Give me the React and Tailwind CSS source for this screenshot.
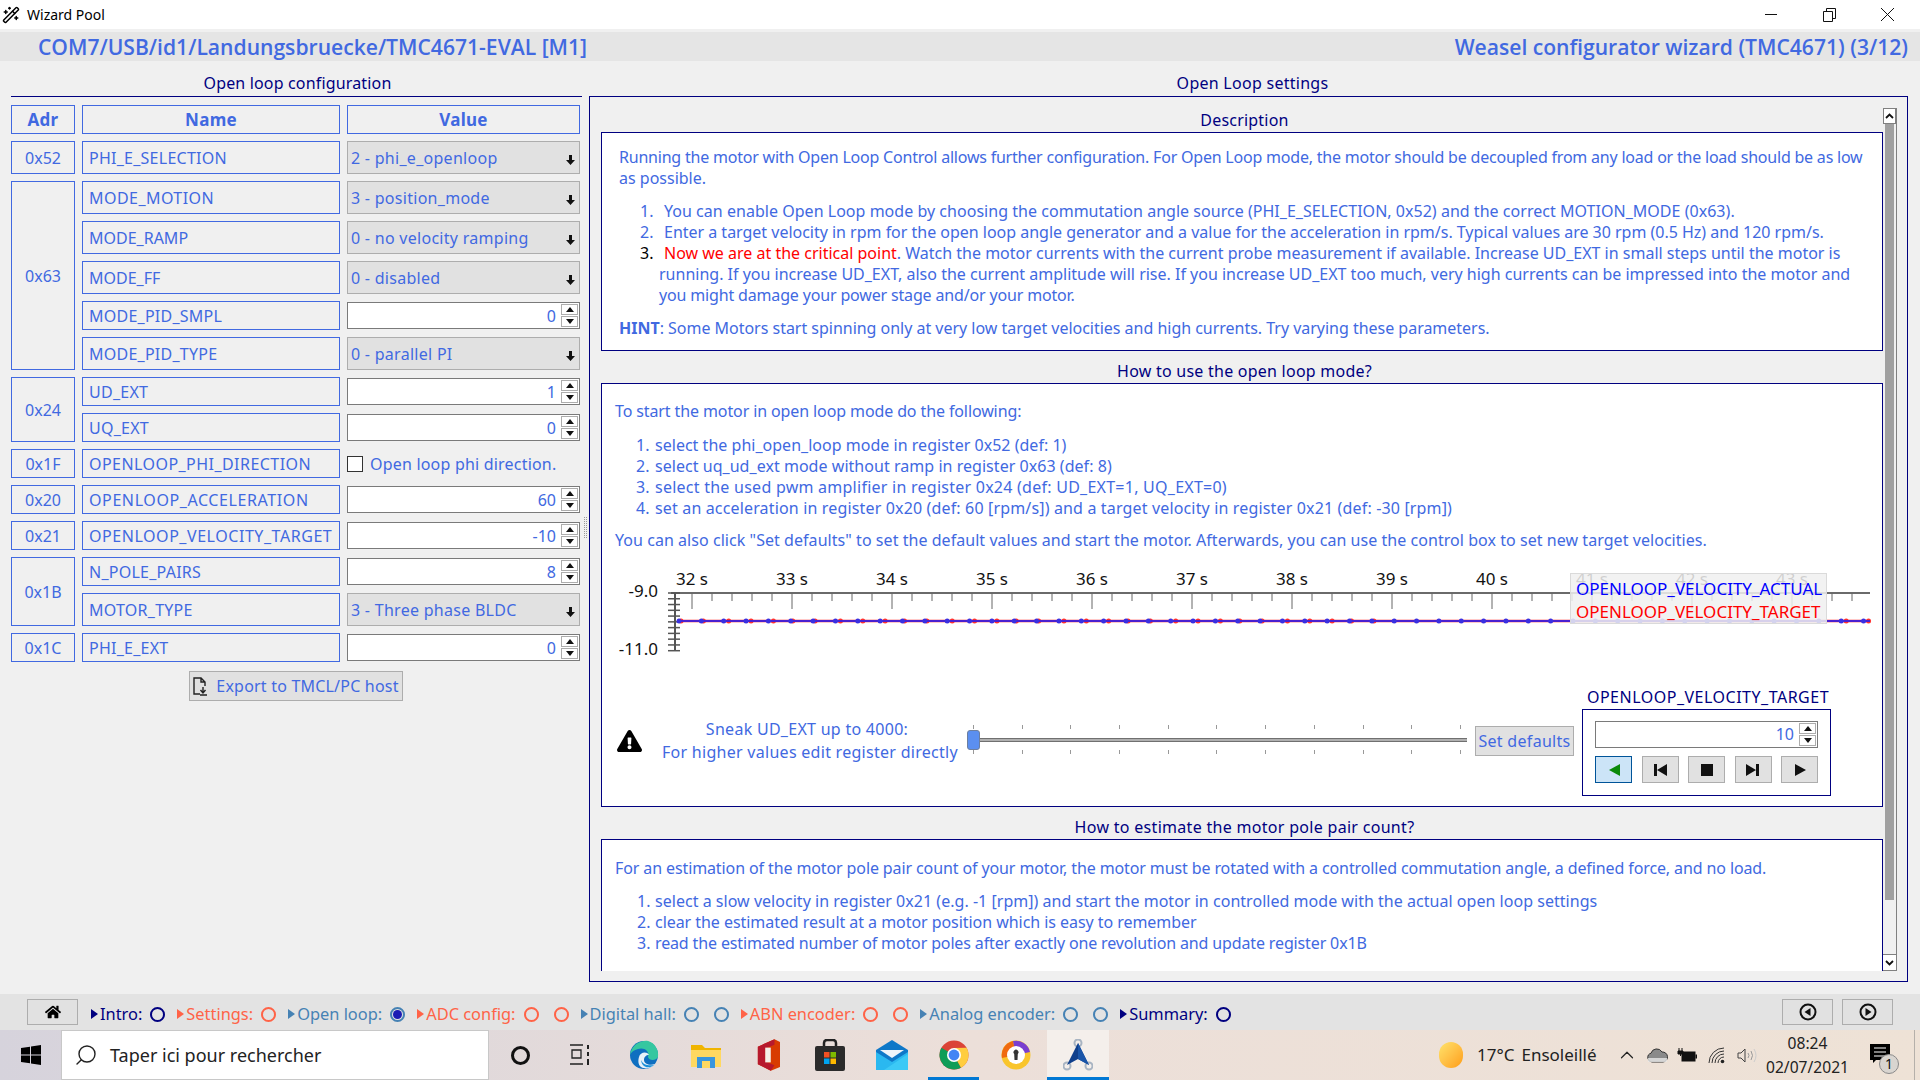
import React from "react";
import { Search, ChevronUp, WandSparkles } from "lucide-react";
import { FaHome, FaExclamationTriangle } from "react-icons/fa";

const regRows = [
  { adr: "0x52", span: "row-span-1", name: "PHI_E_SELECTION", combo: "2 - phi_e_openloop" },
  { adr: "0x63", span: "row-span-5", name: "MODE_MOTION", combo: "3 - position_mode", track: "tracking-[0.45px]" },
  { name: "MODE_RAMP", combo: "0 - no velocity ramping", track: "tracking-[0px]" },
  { name: "MODE_FF", combo: "0 - disabled", track: "tracking-[0px]" },
  { name: "MODE_PID_SMPL", spin: "0" },
  { name: "MODE_PID_TYPE", combo: "0 - parallel PI" },
  { adr: "0x24", span: "row-span-2", name: "UD_EXT", spin: "1" },
  { name: "UQ_EXT", spin: "0" },
  { adr: "0x1F", span: "row-span-1", name: "OPENLOOP_PHI_DIRECTION", check: "Open loop phi direction.", track: "tracking-[0.45px]" },
  { adr: "0x20", span: "row-span-1", name: "OPENLOOP_ACCELERATION", spin: "60", track: "tracking-[0.6px]" },
  { adr: "0x21", span: "row-span-1", name: "OPENLOOP_VELOCITY_TARGET", spin: "-10", track: "tracking-[0.55px]" },
  { adr: "0x1B", span: "row-span-2", name: "N_POLE_PAIRS", spin: "8" },
  { name: "MOTOR_TYPE", combo: "3 - Three phase BLDC" },
  { adr: "0x1C", span: "row-span-1", name: "PHI_E_EXT", spin: "0" },
];

const steps = [
  { label: "Intro:", color: "text-[#000080]", circles: 1 },
  { label: "Settings:", color: "text-[#ff6347]", circles: 1 },
  { label: "Open loop:", color: "text-[#4682b4]", circles: 1, active: true },
  { label: "ADC config:", color: "text-[#ff6347]", circles: 2 },
  { label: "Digital hall:", color: "text-[#4682b4]", circles: 2 },
  { label: "ABN encoder:", color: "text-[#ff6347]", circles: 2 },
  { label: "Analog encoder:", color: "text-[#4682b4]", circles: 2 },
  { label: "Summary:", color: "text-[#000080]", circles: 1 },
];

function SpinButtons() {
  return (
    <div className="flex flex-col gap-px w-[17px] shrink-0">
      <div className="h-[11px] border border-[#adadad] flex items-center justify-center">
        <svg width="8" height="5"><path d="M4 0 L8 5 L0 5 Z" fill="#111" /></svg>
      </div>
      <div className="h-[11px] border border-[#adadad] flex items-center justify-center">
        <svg width="8" height="5"><path d="M0 0 L8 0 L4 5 Z" fill="#111" /></svg>
      </div>
    </div>
  );
}

function SpinBox({ value }) {
  return (
    <div className="my-px h-[27px] bg-white border border-[#7a7a7a] flex items-center justify-end pr-[1px]">
      <span className="pr-[5px] text-[#4169e1]">{value}</span>
      <SpinButtons />
    </div>
  );
}

function Combo({ value }) {
  return (
    <div className="relative bg-[#e1e1e1] border border-[#adadad] flex items-center pl-[3px] text-[#4169e1] tracking-[0.28px]">
      {value}
      <svg className="absolute right-[4px] top-[13px]" width="9" height="10">
        <path d="M3 0 H6 V5 H9 L4.5 10 L0 5 H3 Z" fill="#111" />
      </svg>
    </div>
  );
}

function RegisterTable() {
  const cell = "border border-[#4169e1] text-[#4169e1] flex items-center";
  return (
    <div className="grid grid-cols-[64px_258px_233px] grid-rows-[29px_33px_33px_33px_33px_29px_33px_29px_29px_29px_29px_29px_29px_33px_29px] gap-x-[7px] gap-y-[7px]">
      {["Adr", "Name", "Value"].map((h) => (
        <div key={h} className={`${cell} justify-center font-bold text-[17px] tracking-[0.3px]`}>{h}</div>
      ))}
      {regRows.map((r) => (
        <React.Fragment key={r.name}>
          {r.adr && <div className={`${cell} ${r.span} col-start-1 justify-center`}>{r.adr}</div>}
          <div className={`${cell} col-start-2 pl-[6px] whitespace-nowrap ${r.track || "tracking-[0.25px]"}`}>{r.name}</div>
          <div className="col-start-3">
            {r.combo && <div className="h-full grid"><Combo value={r.combo} /></div>}
            {r.spin && <SpinBox value={r.spin} />}
            {r.check && (
              <div className="h-full flex items-center gap-[7px] text-[#4169e1] whitespace-nowrap tracking-[0.2px]">
                <span className="w-[16px] h-[16px] bg-white border border-[#333]" />
                {r.check}
              </div>
            )}
          </div>
        </React.Fragment>
      ))}
    </div>
  );
}

function ListItem({ n, numW = "w-[24px]", children, numClass = "", track = "" }) {
  return (
    <div className="flex whitespace-nowrap">
      <span className={`${numW} shrink-0 ${numClass}`}>{n}</span>
      <div className={track}>{children}</div>
    </div>
  );
}

function Description() {
  return (
    <div className="h-[219px] bg-white border border-[#000080] pt-[14px] pl-[17px] text-[#4169e1] leading-[21px] overflow-hidden">
      <p className="whitespace-nowrap">
        <span className="tracking-[-0.21px]">Running the motor with Open Loop Control allows further configuration. For Open Loop mode, the motor should be decoupled from any load or the load should be as low</span>
        <br />
        as possible.
      </p>
      <div className="mt-[12px] ml-[21px]">
        <ListItem n="1." track="tracking-[0.03px]">You can enable Open Loop mode by choosing the commutation angle source (PHI_E_SELECTION, 0x52) and the correct MOTION_MODE (0x63).</ListItem>
        <ListItem n="2." track="tracking-[-0.015px]">Enter a target velocity in rpm for the open loop angle generator and a value for the acceleration in rpm/s. Typical values are 30 rpm (0.5 Hz) and 120 rpm/s.</ListItem>
        <ListItem n="3." numClass="text-black">
          <span className="text-[#ff0000]">Now we are at the critical point</span>. Watch the motor currents with the current probe measurement if available. Increase UD_EXT in small steps until the motor is
          <div className="-ml-[5px]">running. If you increase UD_EXT, also the current amplitude will rise. If you increase UD_EXT too much, very high currents can be impressed into the motor and</div>
          <div className="-ml-[5px] tracking-[-0.16px]">you might damage your power stage and/or your motor.</div>
        </ListItem>
      </div>
      <p className="mt-[12px] whitespace-nowrap tracking-[-0.02px]">
        <b>HINT</b>: Some Motors start spinning only at very low target velocities and high currents. Try varying these parameters.
      </p>
    </div>
  );
}

function Chart() {
  const minor = [];
  for (let x = 90; x <= 1258; x += 20) minor.push(x);
  const yTicks = [];
  for (let i = 0; i <= 10; i++) yTicks.push(32 + i * 5.77);
  const blue = [];
  for (let x = 77; x <= 1264; x += 22.35) blue.push(x);
  const labels = [32, 33, 34, 35, 36, 37, 38, 39, 40, 41, 42, 43];
  return (
    <div className="relative h-[120px] mt-[10px]">
      <svg width="1280" height="120" className="block">
        <line x1="69" y1="32" x2="1268" y2="32" stroke="#6a6a6a" strokeWidth="2" />
        {minor.map((x, i) => (
          <line key={x} x1={x} y1="32" x2={x} y2={i % 5 === 0 ? 48 : 40} stroke="#666" strokeWidth="1" />
        ))}
        <line x1="73" y1="32" x2="73" y2="89" stroke="#555" strokeWidth="2" />
        {yTicks.map((y) => (
          <line key={y} x1="66" y1={y} x2="78" y2={y} stroke="#555" strokeWidth="1.5" />
        ))}
        {labels.map((s, i) => (
          <text key={s} x={90 + i * 100} y="24" textAnchor="middle" fontSize="17" fill="#111" fontFamily="Noto Sans">{s} s</text>
        ))}
        <text x="56" y="36" textAnchor="end" fontSize="17" fill="#111" fontFamily="Noto Sans">-9.0</text>
        <text x="56" y="94" textAnchor="end" fontSize="17" fill="#111" fontFamily="Noto Sans">-11.0</text>
        <line x1="77" y1="60" x2="1268" y2="60" stroke="#ff2020" strokeWidth="2.5" />
        {blue.map((x, i) =>
          x < 780 || x > 1235 ? <circle key={x} cx={x + (i % 5 > 1 ? 5 : 2)} cy="60" r="2.5" fill="#ff3030" /> : null
        )}
        <line x1="77" y1="60" x2="1268" y2="60" stroke="#4a20d0" strokeWidth="2" />
        {blue.map((x) => (
          <circle key={x} cx={x} cy="60" r="2.5" fill="#3a30e0" />
        ))}
      </svg>
      <div className="absolute left-[968px] top-[12px] w-[257px] h-[51px] bg-[#f0f0f0]/85 border border-[#dadada] pl-[5px] text-[17px] leading-[23px] pt-[3px] whitespace-nowrap">
        <div className="text-[#0000ff]">OPENLOOP_VELOCITY_ACTUAL</div>
        <div className="text-[#ff0000]">OPENLOOP_VELOCITY_TARGET</div>
      </div>
    </div>
  );
}

function MediaButton({ active, children }) {
  return (
    <div className={`w-[37px] h-[27px] border flex items-center justify-center ${active ? "bg-[#cce4f7] border-[#005499]" : "bg-[#e1e1e1] border-[#adadad]"}`}>
      {children}
    </div>
  );
}

function SliderRow() {
  const ticks = [0, 1, 2, 3, 4, 5, 6, 7, 8, 9, 10];
  return (
    <div className="flex mt-[6px] pl-[15px]">
      <div className="flex items-center h-[108px]">
        <FaExclamationTriangle className="w-[25px] h-[24px] text-black mr-[20px]" />
        <div className="w-[290px] text-center text-[#4169e1] leading-[23px] whitespace-nowrap tracking-[0.28px]">
          Sneak UD_EXT up to 4000:
          <br />
          For higher values edit register directly
        </div>
        <div className="relative w-[500px] h-[30px] ml-[15px] -mt-[3px]">
          <div className="absolute left-0 right-0 top-[13px] h-[4px] bg-[#b0b0b0] border-y border-[#707070]" />
          <div className="absolute left-0 top-[5px] w-[13px] h-[20px] rounded-[3px] bg-[#5b8ff0] border border-[#6d7f9f]" />
          <div className="absolute left-[6px] right-[6px] top-0 flex justify-between">
            {ticks.map((t) => <span key={t} className="w-px h-[4px] bg-[#999]" />)}
          </div>
          <div className="absolute left-[6px] right-[6px] top-[25px] flex justify-between">
            {ticks.map((t) => <span key={t} className="w-px h-[4px] bg-[#999]" />)}
          </div>
        </div>
        <div className="ml-[8px] w-[99px] h-[30px] bg-[#e1e1e1] border border-[#adadad] text-[#4169e1] flex items-center justify-center whitespace-nowrap tracking-[0.3px]">Set defaults</div>
      </div>
      <div className="ml-[8px] w-[249px]">
        <div className="h-[22px] pl-[3px] text-center text-[#000080] leading-[21px] whitespace-nowrap tracking-[0.5px]">OPENLOOP_VELOCITY_TARGET</div>
        <div className="h-[87px] border border-[#000080] pt-[11px] px-[12px]">
          <div className="h-[27px] bg-white border border-[#7a7a7a] flex items-center justify-end pr-[1px]">
            <span className="pr-[5px] text-[#4169e1]">10</span>
            <SpinButtons />
          </div>
          <div className="mt-[8px] flex justify-between">
            <MediaButton active><svg width="14" height="14"><path d="M13 1 V13 L2 7 Z" fill="#0a8a0a" /></svg></MediaButton>
            <MediaButton><svg width="14" height="14"><path d="M1 1 H4 V13 H1 Z M14 1 V13 L4 7 Z" fill="#111" /></svg></MediaButton>
            <MediaButton><svg width="12" height="12"><rect width="12" height="12" fill="#111" /></svg></MediaButton>
            <MediaButton><svg width="14" height="14"><path d="M0 1 L10 7 L0 13 Z M10 1 H13 V13 H10 Z" fill="#111" /></svg></MediaButton>
            <MediaButton><svg width="14" height="14"><path d="M2 1 L13 7 L2 13 Z" fill="#111" /></svg></MediaButton>
          </div>
        </div>
      </div>
    </div>
  );
}

function HowToUse() {
  return (
    <div className="h-[424px] bg-white border border-[#000080] pt-[17px] text-[#4169e1] leading-[21px] whitespace-nowrap overflow-hidden">
      <p className="pl-[13px] tracking-[-0.11px]">To start the motor in open loop mode do the following:</p>
      <div className="mt-[13px] ml-[34px]">
        <ListItem n="1." numW="w-[19px]" track="tracking-[0.02px]">select the phi_open_loop mode in register 0x52 (def: 1)</ListItem>
        <ListItem n="2." numW="w-[19px]" track="tracking-[0.04px]">select uq_ud_ext mode without ramp in register 0x63 (def: 8)</ListItem>
        <ListItem n="3." numW="w-[19px]" track="tracking-[0.25px]">select the used pwm amplifier in register 0x24 (def: UD_EXT=1, UQ_EXT=0)</ListItem>
        <ListItem n="4." numW="w-[19px]" track="tracking-[0.155px]">set an acceleration in register 0x20 (def: 60 [rpm/s]) and a target velocity in register 0x21 (def: -30 [rpm])</ListItem>
      </div>
      <p className="mt-[11px] pl-[13px] tracking-[0.05px]">You can also click "Set defaults" to set the default values and start the motor. Afterwards, you can use the control box to set new target velocities.</p>
      <Chart />
      <SliderRow />
    </div>
  );
}

function PolePairs() {
  return (
    <div className="h-[200px] bg-white border border-[#000080] pt-[18px] text-[#4169e1] leading-[21px] whitespace-nowrap">
      <p className="pl-[13px] tracking-[-0.11px]">For an estimation of the motor pole pair count of your motor, the motor must be rotated with a controlled commutation angle, a defined force, and no load.</p>
      <div className="mt-[12px] ml-[35px]">
        <ListItem n="1." numW="w-[18px]" track="tracking-[0.03px]">select a slow velocity in register 0x21 (e.g. -1 [rpm]) and start the motor in controlled mode with the actual open loop settings</ListItem>
        <ListItem n="2." numW="w-[18px]" track="tracking-[-0.05px]">clear the estimated result at a motor position which is easy to remember</ListItem>
        <ListItem n="3." numW="w-[18px]" track="tracking-[-0.14px]">read the estimated number of motor poles after exactly one revolution and update register 0x1B</ListItem>
      </div>
    </div>
  );
}

function ScrollBar() {
  return (
    <div className="w-[14px] shrink-0 flex flex-col border-r border-b border-[#808080] bg-[#f0f0f0]">
      <div className="h-[16px] border border-[#808080] bg-white flex items-center justify-center">
        <svg width="9" height="6"><path d="M1 5 L4.5 1.5 L8 5" stroke="#111" strokeWidth="1.8" fill="none" /></svg>
      </div>
      <div className="h-[776px] mx-[2px] bg-[#a0a0a0]" />
      <div className="flex-1" />
      <div className="h-[16px] border-t border-[#808080] bg-white flex items-center justify-center">
        <svg width="9" height="6"><path d="M1 1 L4.5 4.5 L8 1" stroke="#111" strokeWidth="1.8" fill="none" /></svg>
      </div>
    </div>
  );
}

function StepList() {
  return (
    <div className="flex items-center ml-[13px] gap-[12px] mt-[5px] text-[16.4px]">
      {steps.map((s) => (
        <div key={s.label} className={`flex items-center ${s.color}`}>
          <svg width="8" height="10" className="mr-[1px]"><path d="M0 0 L7 5 L0 10 Z" fill="currentColor" /></svg>
          <span className="whitespace-nowrap">{s.label}</span>
          {Array.from({ length: s.circles }).map((_, i) => (
            <span key={i} className={`w-[15px] h-[15px] rounded-full border-2 border-current flex items-center justify-center ${i === 0 ? "ml-[8px]" : "ml-[15px]"}`}>
              {s.active && <span className="w-[9px] h-[9px] rounded-full bg-[#1c1cb4]" />}
            </span>
          ))}
        </div>
      ))}
    </div>
  );
}

function NavArrow({ d }) {
  return (
    <div className="w-[51px] h-[26px] bg-[#e1e1e1] border border-[#adadad] flex items-center justify-center">
      <svg width="18" height="18">
        <circle cx="9" cy="9" r="7.5" stroke="#111" strokeWidth="2" fill="none" />
        <path d={d} fill="#111" />
      </svg>
    </div>
  );
}

function TaskSlot({ children, underline, active }) {
  return (
    <div className={`relative w-[62px] h-full flex items-center justify-center shrink-0 ${active ? "bg-[#f4efeb]" : ""}`}>
      {children}
      {underline && <span className={`absolute bottom-0 h-[3px] bg-[#0078d4] ${active ? "left-0 right-0" : "left-[5px] right-[6px]"}`} />}
    </div>
  );
}

function Taskbar() {
  return (
    <div className="h-[50px] flex items-stretch bg-linear-to-r from-[#d6d3dc] via-[#ecdfd9] to-[#eee2d6] text-[#222]">
      <div className="w-[61px] flex items-center justify-center">
        <svg width="20" height="20" viewBox="0 0 20 20">
          <path d="M0 3 L9 1.7 V9.5 H0 Z M10 1.5 L20 0 V9.5 H10 Z M0 10.5 H9 V18.3 L0 17 Z M10 10.5 H20 V20 L10 18.5 Z" fill="#000" />
        </svg>
      </div>
      <div className="w-[428px] h-full bg-white border border-[#c8c8c8] flex items-center pl-[12px] text-[18px]">
        <Search className="w-[24px] h-[24px] -scale-x-100 mr-[12px]" strokeWidth={1.4} />
        Taper ici pour rechercher
      </div>
      <TaskSlot>
        <span className="w-[19px] h-[19px] rounded-full border-[3px] border-[#111]" />
      </TaskSlot>
      <TaskSlot>
        <svg width="21" height="22" viewBox="0 0 21 22" fill="none" stroke="#222" strokeWidth="1.3" className="-ml-[6px]">
          <path d="M1 1 H14 M3 6 H12 V14 H3 Z M1 20 H14" />
          <path d="M19 1 V5 M19 8 V12 M19 15 V21" strokeWidth="2" />
        </svg>
      </TaskSlot>
      <TaskSlot>
        <svg width="30" height="30" viewBox="0 0 30 30">
          <circle cx="15" cy="15" r="14" fill="#0f6fc0" />
          <path d="M1 15 C3 3 14 0 19 1 C26 3 30 10 29 17 C27 21 20 21 19 17 C21 10 14 7 9 9 C5 10 2 12 1 15 Z" fill="#35c7a0" />
          <path d="M10 17 C11 12 18 11 20 15 C17 15 15 17 15 20 C15 24 21 26 26 24 C23 28 17 30 12 27 C9 25 9 20 10 17 Z" fill="#fff" opacity="0.9" />
          <path d="M12 20 C14 25 20 26 25 25 C20 29 13 28 12 20 Z" fill="#1a8fd8" />
        </svg>
      </TaskSlot>
      <TaskSlot>
        <svg width="30" height="26" viewBox="0 0 30 26">
          <path d="M0 3 H11 L14 6 H30 V25 H0 Z" fill="#f0b400" />
          <rect x="0" y="8" width="30" height="17" fill="#ffd861" />
          <rect x="6" y="15" width="18" height="11" fill="#3a96dd" />
          <rect x="11" y="19" width="8" height="7" fill="#ffd861" />
        </svg>
      </TaskSlot>
      <TaskSlot>
        <svg width="24" height="34" viewBox="0 0 26 34">
          <path d="M2 8 L20 0 L26 3 V30 L16 34 L2 27 Z" fill="#d83b01" />
          <path d="M2 8 L20 0 V6 L10 10 V24 L20 28 L16 34 L2 27 Z" fill="#b7192d" />
          <rect x="10" y="9" width="6" height="16" fill="#f4efe9" />
        </svg>
      </TaskSlot>
      <TaskSlot>
        <svg width="30" height="32" viewBox="0 0 30 32">
          <path d="M9 8 V4 Q9 1 12 1 H18 Q21 1 21 4 V8" fill="none" stroke="#222" strokeWidth="2.5" />
          <rect y="7" width="30" height="25" rx="2" fill="#2b2b2b" />
          <rect x="9" y="13" width="5.5" height="5.5" fill="#f25022" />
          <rect x="15.5" y="13" width="5.5" height="5.5" fill="#7fba00" />
          <rect x="9" y="19.5" width="5.5" height="5.5" fill="#00a4ef" />
          <rect x="15.5" y="19.5" width="5.5" height="5.5" fill="#ffb900" />
        </svg>
      </TaskSlot>
      <TaskSlot>
        <svg width="32" height="30" viewBox="0 0 32 30">
          <path d="M0 10 L16 0 L32 10 V30 H0 Z" fill="#0f78c8" />
          <path d="M4 10 H28 L16 18 Z" fill="#eef4fa" />
          <path d="M0 12 L16 22 L32 12 V30 H0 Z" fill="#2ab8f0" />
          <path d="M8 30 L32 14 V30 Z" fill="#45d0f8" opacity="0.7" />
        </svg>
      </TaskSlot>
      <TaskSlot underline>
        <svg width="30" height="30" viewBox="-15 -15 30 30">
          <circle r="14.5" fill="#db4437" />
          <path d="M-12.6 -7.2 A14.5 14.5 0 0 0 7 12.7 L0 0 Z" fill="#0f9d58" />
          <path d="M12.6 -7.2 A14.5 14.5 0 0 1 7 12.7 L0 0 L0 -7 Z" fill="#ffcd40" />
          <circle r="7" fill="#fff" />
          <circle r="5.4" fill="#4285f4" />
        </svg>
      </TaskSlot>
      <TaskSlot>
        <svg width="30" height="32" viewBox="-15 -16 30 32">
          <circle r="14.5" fill="#f9c52c" />
          <path d="M-14 3 A14.5 14.5 0 0 1 -3 -14 L0 0 Z" fill="#f06a10" />
          <path d="M-3 -14 A14.5 14.5 0 0 1 14 -3 L0 0 Z" fill="#7a3fd0" />
          <circle r="9" fill="#fff" />
          <path d="M-1.8 -1 A2.5 2.5 0 1 1 1.8 -1 L1.5 5 H-1.5 Z" fill="#333" />
        </svg>
      </TaskSlot>
      <TaskSlot underline active>
        <svg width="30" height="32" viewBox="0 0 30 32">
          <circle cx="15" cy="4" r="3.5" fill="none" stroke="#a8b4c2" strokeWidth="2" />
          <circle cx="4" cy="27" r="3.5" fill="none" stroke="#a8b4c2" strokeWidth="2" />
          <circle cx="26" cy="27" r="3.5" fill="none" stroke="#a8b4c2" strokeWidth="2" />
          <path d="M15 4 L26 26 L15 20 L4 26 Z" fill="#0f3f8c" />
          <path d="M15 4 V20 L26 26 Z" fill="#1a55a8" />
        </svg>
      </TaskSlot>
      <div className="flex-1" />
      <div className="w-[173px] flex items-center text-[17px] whitespace-nowrap">
        <span className="w-[24px] h-[26px] rounded-full bg-linear-to-br from-[#ffe36a] to-[#ff9d0a] mr-[14px]" />
        <span className="mr-[7px]">17°C</span>
        Ensoleillé
      </div>
      <div className="w-[30px] flex items-center justify-center">
        <ChevronUp className="w-[22px] h-[22px]" strokeWidth={1.3} />
      </div>
      <div className="w-[30px] flex items-center justify-center">
        <svg width="21" height="15" viewBox="0 0 21 15">
          <path d="M5 14 A4.5 4.5 0 0 1 4 5.2 A6 6 0 0 1 15 4 A5 5 0 0 1 16 14 Z" fill="#8a8a8a" stroke="#333" strokeWidth="1" />
          <path d="M1 10 H20 V14 H1 Z" fill="#e8e8e8" opacity="0.8" />
        </svg>
      </div>
      <div className="w-[30px] flex items-center justify-center">
        <svg width="20" height="15" viewBox="0 0 20 15">
          <path d="M2 0 V3 M5 0 V3 M1 3 H6 V6 H1 Z M3.5 6 V8" stroke="#111" strokeWidth="1" fill="#111" />
          <rect x="5" y="4" width="13" height="9" fill="#111" stroke="#111" />
          <rect x="18.5" y="6.5" width="1.5" height="4" fill="#111" />
        </svg>
      </div>
      <div className="w-[30px] flex items-center justify-center">
        <svg width="18" height="17" viewBox="0 0 18 17" fill="none" stroke="#333" strokeWidth="1">
          <path d="M1 16 A15 15 0 0 1 16 1 M4 16 A12 12 0 0 1 16 4 M7 16 A9 9 0 0 1 16 7 M10 16 A6 6 0 0 1 16 10" />
          <circle cx="14.5" cy="14.5" r="1.8" fill="#222" stroke="none" />
        </svg>
      </div>
      <div className="w-[30px] flex items-center justify-center">
        <svg width="21" height="17" viewBox="0 0 21 17" fill="none" stroke="#444" strokeWidth="1">
          <path d="M1 6 H4 L8 2 V15 L4 11 H1 Z" />
          <path d="M11 6 Q13 8.5 11 11 M14 4 Q17 8.5 14 13" stroke="#999" />
          <path d="M17 2 Q21 8.5 17 15" stroke="#ccc" />
        </svg>
      </div>
      <div className="w-[91px] flex flex-col items-center justify-center text-[15.6px] leading-[24px] whitespace-nowrap">
        <div>08:24</div>
        <div>02/07/2021</div>
      </div>
      <div className="relative w-[61px] flex items-center justify-center">
        <svg width="20" height="19" viewBox="0 0 20 19" className="-mt-[3px] -ml-[8px]">
          <path d="M0 0 H20 V16 H6 L3 19 V16 H0 Z" fill="#000" />
          <path d="M4 4 H16 M4 8 H16 M4 12 H16" stroke="#fff" strokeWidth="1.2" />
        </svg>
        <span className="absolute left-[26px] top-[24px] w-[20px] h-[20px] rounded-full bg-[#d9d5d0] border border-[#8a8a8a] text-[14px] leading-[18px] text-center text-[#111]">1</span>
      </div>
      <div className="w-[6px] border-l border-[#b5b0aa]" />
    </div>
  );
}

export default function App() {
  return (
    <div className="w-[1920px] h-[1080px] flex flex-col overflow-hidden bg-[#f0f0f0] text-[16px] font-['Noto_Sans',sans-serif]">
      <div className="h-[29px] bg-white flex items-center pl-[2px] shrink-0">
        <WandSparkles className="w-[18px] h-[18px] text-black" strokeWidth={2} />
        <span className="ml-[7px] text-[14px] text-black">Wizard Pool</span>
        <div className="flex-1" />
        <svg width="13" height="13" className="mr-[45px]"><path d="M0 6.5 H12" stroke="#111" /></svg>
        <svg width="13" height="14" className="mr-[45px]" fill="none" stroke="#111">
          <path d="M0.5 3.5 H9.5 V13.5 H0.5 Z M3.5 3.5 V0.5 H12.5 V10.5 H9.5" />
        </svg>
        <svg width="13" height="13" className="mr-[26px]" stroke="#111"><path d="M0 0 L13 13 M13 0 L0 13" /></svg>
      </div>

      <div className="mt-[3px] h-[29px] bg-[#e5e5e5] flex items-center justify-between pl-[38px] pr-[12px] text-[21.1px] font-semibold text-[#4169e1] font-['Open_Sans',sans-serif] shrink-0">
        <span>COM7/USB/id1/Landungsbruecke/TMC4671-EVAL [M1]</span>
        <span>Weasel configurator wizard (TMC4671) (3/12)</span>
      </div>

      <div className="flex-1 flex min-h-0">
        <div className="w-[571px] ml-[11px] shrink-0">
          <div className="h-[35px] flex items-end justify-center pb-[1px] pl-[2px] text-[#000080] tracking-[0.16px]">Open loop configuration</div>
          <div className="border-t border-[#000080] pt-[8px]">
            <RegisterTable />
            <div className="mt-[9px] flex justify-center">
              <div className="-ml-[2px] w-[214px] h-[30px] bg-[#e1e1e1] border border-[#adadad] flex items-center justify-center gap-[6px] text-[#4169e1] whitespace-nowrap tracking-[0.2px]">
                <svg width="18" height="19" viewBox="0 0 18 19" fill="none" stroke="#222" strokeWidth="1.4">
                  <path d="M8 17 H2 V1 H9 L13 5 V9 M9 1 V5 H13" />
                  <path d="M11 10 V15 M8.5 13 L11 16 L13.5 13 M8 18 H15" />
                </svg>
                Export to TMCL/PC host
              </div>
            </div>
          </div>
        </div>

        <div className="w-[7px] flex items-center justify-center shrink-0">
          <div className="w-[3px] h-[21px] border-x border-dotted border-[#999]" />
        </div>

        <div className="w-[319px] flex-1 mr-[12px] flex flex-col min-w-0">
          <div className="h-[35px] flex items-end justify-center pb-[1px] pl-[8px] text-[#000080] tracking-[0.27px]">Open Loop settings</div>
          <div className="h-[886px] border border-[#000080] pt-[11px] pb-[10px] pl-[11px] pr-[10px] flex">
            <div className="flex-1 min-w-0 overflow-hidden">
              <div className="h-[24px] flex items-center justify-center pl-[5px] text-[#000080] tracking-[0.2px]">Description</div>
              <Description />
              <div className="h-[32px] flex items-end justify-center pl-[5px] text-[#000080] tracking-[0.24px]">How to use the open loop mode?</div>
              <HowToUse />
              <div className="h-[32px] flex items-end justify-center pl-[5px] text-[#000080] tracking-[0.3px]">How to estimate the motor pole pair count?</div>
              <PolePairs />
            </div>
            <ScrollBar />
          </div>
        </div>
      </div>

      <div className="h-[36px] bg-[#e3e3e3] flex items-center pl-[27px] pr-[27px] shrink-0">
        <div className="w-[51px] h-[26px] bg-[#e1e1e1] border border-[#adadad] flex items-center justify-center">
          <FaHome className="w-[16px] h-[16px] text-black" />
        </div>
        <StepList />
        <div className="flex-1" />
        <NavArrow d="M11.5 5 V13 L5.5 9 Z" />
        <div className="w-[9px]" />
        <NavArrow d="M6.5 5 V13 L12.5 9 Z" />
      </div>

      <Taskbar />
    </div>
  );
}
